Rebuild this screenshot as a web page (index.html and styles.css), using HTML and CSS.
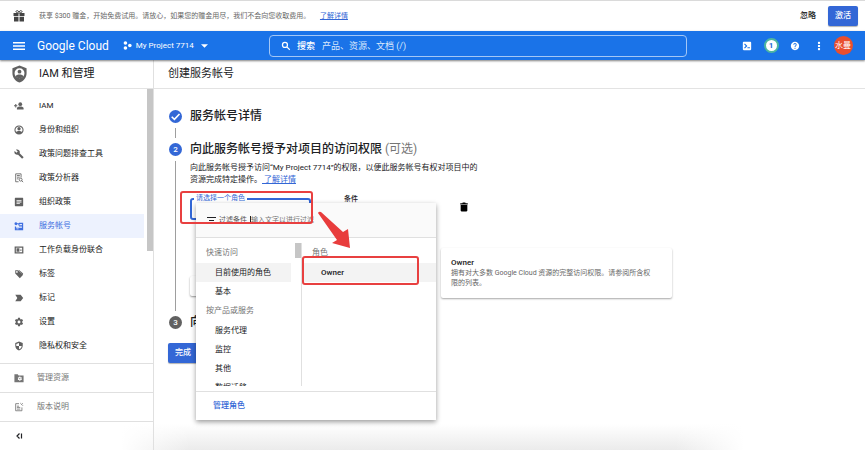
FILE: index.html
```
<!DOCTYPE html>
<html lang="zh-CN">
<head>
  <title>创建服务帐号</title>
  <meta charset="utf-8">
  <link rel="stylesheet" href="styles.css">
</head>
<body>
  <div class="banner">
    <svg class="gift" viewBox="0 0 24 24"><path d="M1 6h10v6H1zM13 6h10v6H13zM2 13.500h9V23H2zM13 13.500h9V23h-9z"/><path d="M12 6C9 6 6 5 6 3s4-3 6 1c2-4 6-3 6-1s-3 3-6 3z" fill="none" stroke="currentColor" stroke-width="2"/></svg>
    <p>获享 $300 赠金，开始免费试用。请放心，如果您的赠金用尽，我们不会向您收取费用。 <a href="#">了解详情</a></p>
    <button class="ignore">忽略</button>
    <button class="primary">激活</button>
  </div>

  <header class="topbar">
    <div class="brand">
      <button class="icon-btn" aria-label="菜单"><svg viewBox="0 0 12 12"><path d="M0 2h12v1.500H0zM0 5.300h12v1.500H0zM0 8.600h12v1.500H0z"/></svg></button>
      <a class="logo" href="#">Google Cloud</a>
      <button class="project">
        <svg class="dots" viewBox="0 0 10 10"><circle cx="2.700" cy="2.200" r="2"/><circle cx="2.700" cy="7.800" r="2"/><circle cx="7.600" cy="5" r="2"/></svg>
        My Project 7714
        <svg class="caret" viewBox="0 0 8 4"><path d="M0 0h8L4 4z"/></svg>
      </button>
    </div>
    <div class="search">
      <svg viewBox="0 0 24 24"><circle cx="9.500" cy="9.500" r="6" fill="none" stroke="currentColor" stroke-width="3"/><path d="M13 15l2-2 7 7-2 2z"/></svg>
      <label for="search">搜索</label>
      <input type="text" id="search" placeholder="产品、资源、文档 (/)">
    </div>
    <div class="tools">
      <button aria-label="Cloud Shell"><svg viewBox="0 0 24 24"><path fill-rule="evenodd" d="M4 2h16a2 2 0 0 1 2 2v16a2 2 0 0 1-2 2H4a2 2 0 0 1-2-2V4a2 2 0 0 1 2-2zM5 8l4 4-4 4 2 2 6-6-6-6zM13 15v2.500h6V15z"/></svg></button>
      <button aria-label="通知"><span class="count">1</span></button>
      <button aria-label="帮助"><svg viewBox="0 0 24 24"><path d="M12 2C6.480 2 2 6.480 2 12s4.480 10 10 10 10-4.480 10-10S17.520 2 12 2zm1 17h-2v-2h2v2zm2.070-7.750l-.9.920C13.450 12.900 13 13.500 13 15h-2v-.5c0-1.100.450-2.100 1.170-2.830l1.240-1.260c.370-.360.590-.860.590-1.410 0-1.100-.9-2-2-2s-2 .9-2 2H8c0-2.210 1.790-4 4-4s4 1.790 4 4c0 .880-.360 1.680-.930 2.250z"/></svg></button>
      <button aria-label="更多"><svg viewBox="0 0 24 24"><rect x="9.500" y="2" width="5" height="5"/><rect x="9.500" y="9.500" width="5" height="5"/><rect x="9.500" y="17" width="5" height="5"/></svg></button>
      <button aria-label="帐号"><span class="avatar">水曼</span></button>
    </div>
  </header>

  <div class="page">
    <aside class="sidebar">
      <h2 class="bar-title">
        <svg viewBox="0 0 24 24"><path fill-rule="evenodd" d="M12 0L2 4v7c0 6 4.300 11.500 10 13 5.700-1.500 10-7 10-13V4zM12 4a7 7 0 1 1 0 14a7 7 0 1 1 0-14z"/><circle cx="12" cy="8.700" r="2.700"/><path d="M6.500 15c1-3 10-3 11 0-2 4-9 4-11 0z"/></svg>
        IAM 和管理
      </h2>
      <nav class="menu">
        <a href="#"><svg viewBox="0 0 24 24"><circle cx="15" cy="7.500" r="4.500"/><path d="M7 19v-2c0-5 16-5 16 0v2zM7 20h16v1H7zM3 7h2.500v3H8v2.500H5.500v3H3v-3H0V10h3z"/></svg>IAM</a>
        <a href="#"><svg viewBox="0 0 24 24"><path fill-rule="evenodd" d="M12 1a11 11 0 1 0 0 22 11 11 0 1 0 0-22zM12 3.500a8.500 8.500 0 0 1 7 13.300c-3-3.500-11-3.500-14 0A8.500 8.500 0 0 1 12 3.500z"/><circle cx="12" cy="9" r="4"/></svg>身份和组织</a>
        <a href="#"><svg viewBox="0 0 24 24"><path d="M22.700 19l-9.100-9.100c.9-2.300.4-5-1.500-6.900-2-2-5-2.400-7.400-1.300L9 6 6 9 1.600 4.700C.4 7.100.9 10.100 2.900 12.100c1.900 1.900 4.600 2.400 6.900 1.500l9.100 9.100c.4.4 1 .4 1.400 0l2.300-2.300c.5-.4.5-1.100.1-1.400z"/></svg>政策问题排查工具</a>
        <a href="#"><svg viewBox="0 0 24 24"><path d="M11 21H4V2h13v9M7 6h7M7 10h7M7 14h4" fill="none" stroke="currentColor" stroke-width="2"/><circle cx="16" cy="16" r="3.500" fill="none" stroke="currentColor" stroke-width="2"/><path d="M18 18l4 4" stroke="currentColor" stroke-width="2"/></svg>政策分析器</a>
        <a href="#"><svg viewBox="0 0 24 24"><path fill-rule="evenodd" d="M3 2h18l1 1v18l-1 1H3l-1-1V3zM6 7v2h12V7zM6 11v2h12v-2zM6 15v2h8v-2z"/></svg>组织政策</a>
        <a href="#" class="active"><svg viewBox="0 0 24 24"><path fill-rule="evenodd" d="M12 4h10v18H2v-9h3v3h14v-3h-7V10h7V7h-7zM6 18v2h5v-2z"/><path fill-rule="evenodd" d="M4.500 3a3.500 3.500 0 0 1 3.300 2.500H15V8h-2v2.500h-2.500V8H7.800A3.500 3.500 0 1 1 4.500 3z"/></svg>服务帐号</a>
        <a href="#"><svg viewBox="0 0 24 24"><path d="M3 5h18v14H3z" fill="none" stroke="currentColor" stroke-width="3"/><path d="M6 8h7v8H6zM15 11h3v3h-3z"/></svg>工作负载身份联合</a>
        <a href="#"><svg viewBox="0 0 24 24"><path fill-rule="evenodd" d="M3 3h7l12 11-8 8L3 11zM7 5a2 2 0 1 0 0 4 2 2 0 1 0 0-4z"/><path d="M13 3l9 8-1 2L11 3z"/></svg>标签</a>
        <a href="#"><svg viewBox="0 0 24 24"><path d="M3 4h13l6 8-6 8H3l5-8z"/></svg>标记</a>
        <a href="#"><svg viewBox="0 0 24 24"><path d="M19.430 12.980c.040-.320.070-.640.070-.980s-.030-.660-.070-.980l2.110-1.650c.190-.150.240-.420.120-.640l-2-3.460c-.120-.220-.390-.3-.610-.220l-2.490 1c-.520-.4-1.080-.730-1.690-.980l-.380-2.650C14.460 2.180 14.250 2 14 2h-4c-.250 0-.460.180-.490.420l-.380 2.650c-.610.250-1.170.590-1.690.980l-2.490-1c-.230-.090-.490 0-.610.220l-2 3.460c-.130.220-.070.490.120.640l2.110 1.650c-.040.320-.070.650-.070.980s.030.660.070.980l-2.110 1.650c-.190.150-.240.420-.120.640l2 3.460c.120.220.390.3.610.220l2.490-1c.520.4 1.080.730 1.690.980l.380 2.650c.030.240.240.420.490.420h4c.250 0 .460-.180.490-.420l.380-2.650c.610-.250 1.170-.590 1.690-.980l2.490 1c.230.090.490 0 .610-.220l2-3.460c.120-.220.070-.490-.120-.640l-2.110-1.650zM12 15.500c-1.930 0-3.500-1.570-3.500-3.500s1.570-3.500 3.500-3.500 3.500 1.570 3.500 3.500-1.570 3.500-3.500 3.500z"/></svg>设置</a>
        <a href="#"><svg viewBox="0 0 24 24"><path fill-rule="evenodd" d="M12 1L3 5v6c0 5.500 3.800 10.700 9 12 5.200-1.300 9-6.500 9-12V5zM12 4.500V12h6.500c-.5 4-3 7-6.500 8V12H5.500V7z"/></svg>隐私权和安全</a>
        <div class="thumb"></div>
      </nav>
      <a class="foot" href="#"><svg viewBox="0 0 24 24"><path fill-rule="evenodd" d="M1 3h8l2 3h12v16H1zM13 8.500l-1 2-2-.5-1 2 1.500 1.500L9 15l1 2 2-.5 1 2h2l1-2 2 .5 1-2-1.500-1.500L19 12l-1-2-2 .5-1-2z"/><circle cx="14" cy="13.500" r="1.500"/></svg>管理资源</a>
      <a class="foot" href="#"><svg viewBox="0 0 24 24"><path d="M12 4H4v17h15v-8M7 10h5M7 13h8M7 17h8M16 2v2M22 8h-2M21 3l-4 4" fill="none" stroke="currentColor" stroke-width="2"/></svg>版本说明</a>
      <button class="collapse" aria-label="收起"><svg viewBox="0 0 8 8"><path d="M4.500 1.500L2 4l2.500 2.500M6.500 1.500v5" fill="none" stroke="currentColor" stroke-width="1.200"/></svg></button>
    </aside>

    <main>
      <h1 class="bar-title">创建服务帐号</h1>
      <div class="stepper">
        <section class="step first">
          <div class="rail">
            <span class="dot"><svg viewBox="0 0 12 12"><path d="M2.500 6.200L5 8.600l4.700-4.900" fill="none" stroke="currentColor" stroke-width="1.500"/></svg></span>
          </div>
          <h3>服务帐号详情</h3>
        </section>

        <section class="step">
          <div class="rail"><span class="dot">2</span></div>
          <div class="content">
            <h3>向此服务帐号授予对项目的访问权限 <small>(可选)</small></h3>
            <p class="desc">向此服务帐号授予访问“My Project 7714”的权限，以便此服务帐号有权对项目中的资源完成特定操作。<a href="#">&nbsp;了解详情</a></p>
            <div class="role-row">
              <div class="field">
                <label for="role">请选择一个角色</label>
                <select id="role"><option></option></select>
              </div>
              <span class="cond">条件</span>
              <button class="delete" aria-label="删除"><svg viewBox="0 0 24 24"><path d="M4 7h16v14l-2 2H6l-2-2zM3 3h5l1-2h6l1 2h5v3H3z"/></svg></button>

              <div class="popup">
                <div class="filter">
                  <svg viewBox="0 0 9 7"><path d="M0 0h9v1H0zM2 3h5v1H2zM3 6h3v1H3z"/></svg>
                  <label for="filter">过滤条件</label>
                  <input type="text" id="filter" placeholder="输入文字以进行过滤">
                </div>
                <div class="lists">
                  <div class="groups">
                    <h4>快速访问</h4>
                    <button class="selected">目前使用的角色</button>
                    <button>基本</button>
                    <h4>按产品或服务</h4>
                    <button>服务代理</button>
                    <button>监控</button>
                    <button>其他</button>
                    <button>数据迁移</button>
                    <div class="thumb"></div>
                  </div>
                  <div class="roles">
                    <h4>角色</h4>
                    <button class="selected">Owner</button>
                  </div>
                </div>
                <a class="manage" href="#">管理角色</a>
              </div>

              <div class="tip">
                <b>Owner</b>
                <p>拥有对大多数 Google Cloud 资源的完整访问权限。请参阅所含权限的列表。</p>
              </div>

              <div class="mark mark-field"></div>
              <div class="mark mark-owner"></div>
              <svg class="arrow" viewBox="0 0 34 38"><path d="M1 2Q2 0 4 1L26 21L31 18L33 37L15 32L20 29Z"/></svg>
            </div>
            <button class="add" aria-label="添加其他角色"></button>
          </div>
        </section>

        <section class="step last">
          <div class="rail"><span class="dot">3</span></div>
          <h3>向</h3>
        </section>
        <button class="primary done">完成</button>
      </div>
    </main>
  </div>
</body>
</html>
```
FILE: styles.css
```
* {
  box-sizing: border-box;
}
body {
  margin: 0;
  min-height: 100vh;
  display: flex;
  flex-direction: column;
  font-family: Roboto, "Noto Sans CJK SC", sans-serif;
  font-size: 8px;
  line-height: 12px;
  color: #202124;
  background: #fff;
}
h1, h2, h3, h4, p {
  margin: 0;
}
button, input, select {
  font: inherit;
  color: inherit;
  border: 0;
  padding: 0;
  background: none;
}
a {
  color: #3367d6;
}
svg {
  fill: currentColor;
  flex: none;
}

/* free trial banner */
.banner {
  display: flex;
  align-items: center;
  height: 31px;
  padding: 0 7px 0 13px;
  border-top: 1px solid #dadada;
  font-size: 7px;
  color: #666;
}
.gift {
  width: 12px;
  height: 12px;
  margin-right: 14px;
  color: #444;
}
.banner p {
  flex: 1;
}
.banner a {
  margin-left: 8px;
}
.ignore {
  margin-right: 12px;
  font-size: 8px;
  font-weight: 500;
  color: #222;
}
.primary {
  height: 20px;
  width: 30px;
  border-radius: 2px;
  background: #3367d6;
  color: #fff;
  font-size: 8px;
  font-weight: 500;
  box-shadow: 0 1px 1px rgba(0, 0, 0, .3);
}

/* blue header */
.topbar {
  display: flex;
  align-items: center;
  height: 29px;
  background: #1a73e8;
  color: #fff;
  box-shadow: 0 1px 2px rgba(0, 0, 0, .5);
  z-index: 1;
}
.brand {
  flex: 0 0 269px;
  display: flex;
  align-items: center;
  padding-left: 13px;
}
.icon-btn svg {
  display: block;
  width: 12px;
  height: 12px;
}
.logo {
  margin: 0 14px 0 12px;
  font-size: 12px;
  color: #fff;
  text-decoration: none;
}
.project {
  display: flex;
  align-items: center;
  gap: 4px;
}
.dots {
  width: 9px;
  height: 9px;
}
.caret {
  width: 7px;
  height: 4px;
  margin-left: 3px;
}
.search {
  flex: 1;
  display: flex;
  align-items: center;
  height: 22px;
  padding-left: 11px;
  border: 1px solid #a3c7f6;
  border-radius: 4px;
  font-size: 9px;
}
.search svg {
  width: 10px;
  height: 10px;
  margin-right: 6px;
}
.search label {
  font-weight: 500;
  margin-right: 7px;
}
.search input {
  flex: 1;
}
.search input::placeholder {
  color: #dce9fc;
}
.tools {
  display: flex;
  padding: 0 10px 0 48px;
}
.tools button {
  display: flex;
  align-items: center;
  justify-content: center;
  width: 24px;
  height: 20px;
}
.tools svg {
  width: 10px;
  height: 10px;
}
.count {
  width: 15px;
  height: 15px;
  line-height: 11px;
  border: 2px solid #4db6a0;
  border-radius: 50%;
  background: #fff;
  color: #1967d2;
  font-weight: 700;
}
.avatar {
  flex: none;
  width: 19px;
  height: 19px;
  line-height: 19px;
  border-radius: 50%;
  background: #e94f2e;
}

.page {
  flex: 1;
  display: flex;
  background:
    linear-gradient(to right, #fff 14%, transparent 22%, transparent 78%, #fff 86%),
    linear-gradient(to top, #ebebeb, #fff 26px);
}
.bar-title {
  display: flex;
  align-items: center;
  height: 29px;
  border-bottom: 1px solid #e3e3e3;
  font-size: 11px;
  font-weight: 400;
}

/* left navigation */
.sidebar {
  flex: 0 0 154px;
  border-right: 1px solid #e0e0e0;
}
.sidebar .bar-title {
  padding-left: 11px;
  gap: 11px;
}
.sidebar .bar-title svg {
  width: 17px;
  height: 18px;
  color: #616161;
}
.menu {
  position: relative;
  padding: 5px 9px 5px 0;
}
.menu a {
  display: flex;
  align-items: center;
  height: 24px;
  padding-left: 14px;
  gap: 15px;
  color: #212121;
  text-decoration: none;
}
.menu svg {
  width: 10px;
  height: 10px;
  color: #616161;
}
.menu .active {
  background: #edf2fe;
}
.menu .active, .menu .active svg {
  color: #3f6fe0;
}
.thumb {
  position: absolute;
  top: 0;
  right: 0;
  width: 6px;
  height: 162px;
  background: #c6c6c6;
}
.foot {
  display: flex;
  align-items: center;
  height: 29px;
  padding-left: 14px;
  gap: 13px;
  border-top: 1px solid #e0e0e0;
  color: #757575;
  text-decoration: none;
}
.foot svg {
  width: 10px;
  height: 10px;
}
.collapse {
  display: block;
  width: 100%;
  height: 29px;
  padding-left: 15px;
  border-top: 1px solid #e0e0e0;
}
.collapse svg {
  display: block;
  width: 8px;
  height: 8px;
}

/* stepper */
main {
  flex: 1;
}
main .bar-title {
  padding-left: 14px;
}
.stepper {
  padding: 21px 14px 0;
}
.step {
  display: flex;
  gap: 8px;
  min-height: 173px;
  padding-left: 1px;
}
.first {
  min-height: 33px;
}
.last {
  min-height: 27px;
}
.rail {
  display: flex;
  flex-direction: column;
  align-items: center;
  width: 13px;
}
.rail::after {
  content: "";
  flex: 1;
  width: 1px;
  margin: 5px 0;
  background: #9e9e9e;
}
.last .rail::after {
  display: none;
}
.dot {
  width: 13px;
  height: 13px;
  border-radius: 50%;
  background: #3367d6;
  color: #fff;
  line-height: 13px;
  text-align: center;
  font-weight: 500;
}
.dot svg {
  display: block;
}
.last .dot {
  background: #616161;
}
h3 {
  font-size: 12px;
  line-height: 13px;
  font-weight: 500;
}
h3 small {
  font-size: 12px;
  font-weight: 400;
  color: #757575;
}
.desc {
  max-width: 290px;
  margin-top: 6px;
}
.role-row {
  position: relative;
  display: flex;
  align-items: flex-start;
  width: 279px;
  margin-top: 12px;
}
.field {
  position: relative;
  width: 121px;
}
.field label {
  position: absolute;
  top: -6px;
  left: 4px;
  padding: 0 2px;
  background: #fff;
  font-size: 7px;
  color: #3367d6;
}
.field select {
  display: block;
  appearance: none;
  width: 100%;
  height: 22px;
  border: 2px solid #3367d6;
  border-radius: 3px;
}
.cond {
  margin: -5px 0 0 33px;
  font-size: 7px;
  font-weight: 500;
}
.delete {
  margin: 4px 0 0 auto;
}
.delete svg {
  display: block;
  width: 10px;
  height: 10px;
  color: #000;
}
.add {
  display: block;
  width: 80px;
  height: 20px;
  margin-top: 56px;
  border-radius: 2px;
  background: #fff;
  box-shadow: 0 1px 2px rgba(0, 0, 0, .4);
}
.done {
  display: block;
}

/* role picker */
.popup {
  position: absolute;
  top: 5px;
  left: 6px;
  width: 240px;
  background: #fff;
  box-shadow: 0 2px 5px rgba(0, 0, 0, .4);
}
.filter {
  display: flex;
  align-items: center;
  height: 35px;
  padding-left: 11px;
  border-bottom: 1px solid #e0e0e0;
  background: #fafafa;
  font-size: 7px;
}
.filter svg {
  width: 9px;
  height: 7px;
  margin-right: 3px;
}
.filter label {
  margin-right: 3px;
  color: #555;
}
.filter input {
  width: 72px;
  border-left: 1px solid #222;
  line-height: 8px;
}
.filter input::placeholder {
  color: #757575;
}
.lists {
  display: flex;
  height: 143px;
  margin: 5px 0;
}
.groups {
  position: relative;
  width: 106px;
  padding-right: 10px;
  border-right: 1px solid #e0e0e0;
  overflow: hidden;
}
.groups .thumb {
  height: 15px;
}
.roles {
  flex: 1;
}
.lists h4 {
  padding-left: 10px;
  font-size: 8px;
  line-height: 20px;
  font-weight: 400;
  color: #757575;
}
.lists button {
  display: block;
  width: 100%;
  height: 19px;
  padding-left: 19px;
  text-align: left;
}
.lists .selected {
  background: #f3f3f3;
}
.roles .selected {
  font-weight: 500;
}
.manage {
  display: block;
  padding-left: 17px;
  line-height: 28px;
  border-top: 1px solid #e0e0e0;
  font-weight: 500;
  text-decoration: none;
}
.tip {
  position: absolute;
  top: 50px;
  left: 251px;
  width: 231px;
  padding: 10px 18px 10px 10px;
  border-radius: 2px;
  background: #fff;
  box-shadow: 0 1px 2px rgba(0, 0, 0, .35);
  font-size: 7px;
  line-height: 10px;
  color: #666;
}
.tip b {
  font-size: 8px;
  font-weight: 500;
  color: #212121;
}

/* red highlights */
.mark {
  position: absolute;
  border: 2px solid #e84040;
  border-radius: 3px;
}
.mark-field {
  top: -7px;
  left: -10px;
  width: 133px;
  height: 33px;
}
.mark-owner {
  top: 58px;
  left: 112px;
  width: 117px;
  height: 29px;
}
.arrow {
  position: absolute;
  top: 13px;
  left: 127px;
  width: 34px;
  height: 38px;
  color: #e83c3c;
}
```
